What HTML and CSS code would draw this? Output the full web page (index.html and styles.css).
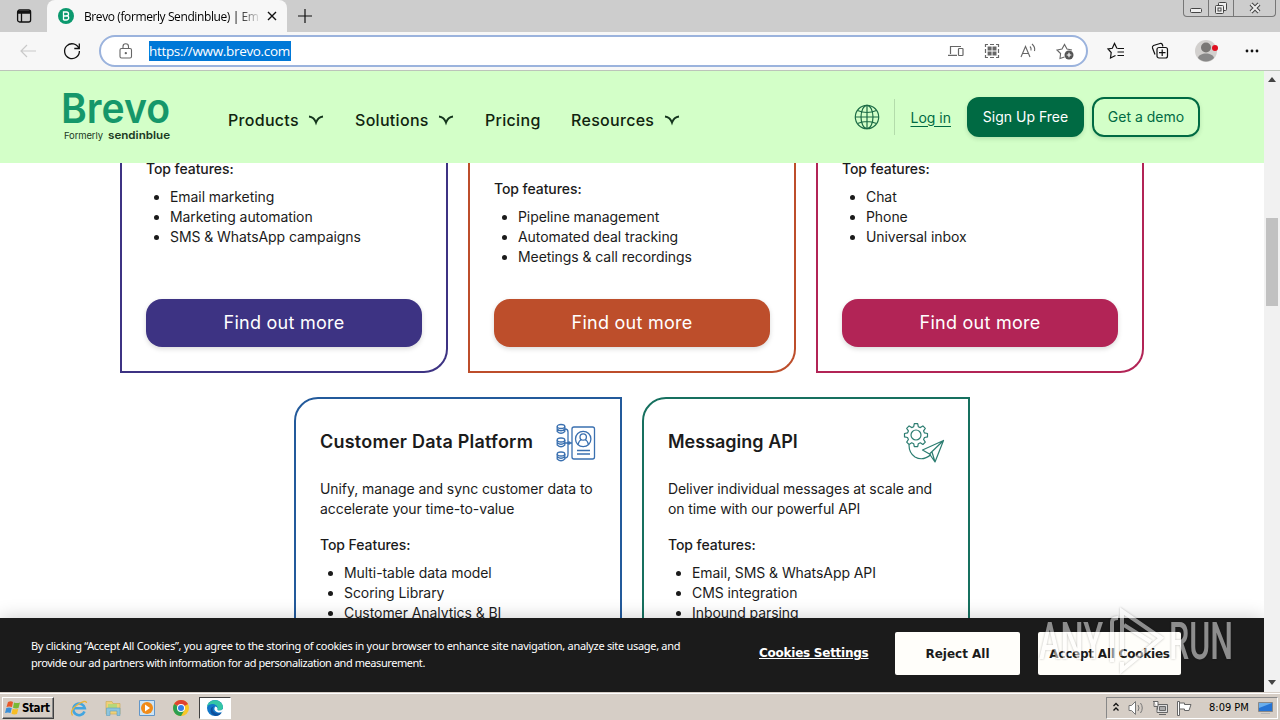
FILE: index.html
```html
<!DOCTYPE html>
<html lang="en">
<head>
    <meta charset="UTF-8">
    <meta name="viewport" content="width=device-width, initial-scale=1.0">
    <title>Brevo (formerly Sendinblue)</title>
    <link rel="stylesheet" href="styles.css">
</head>
<body>
    <div class="screen">
        <div class="titlebar">
            <div class="tab-actions">
                <svg width="16" height="16" viewBox="0 0 16 16" fill="none" stroke="#111" stroke-width="1.3"><rect x="1.6" y="2" width="13" height="12" rx="2"/><path d="M2 3.5h12.5M2 5h12.5M5.5 5v9" /></svg>
            </div>
            <div class="tab">
                <svg class="favicon" width="16" height="16" viewBox="0 0 16 16"><circle cx="8" cy="8" r="8" fill="#0b996e"/><path d="M5.5 12V4h3a2 2 0 0 1 0 4H5.500M8.300 7.600c3.300 0 3 4.400 0 4.400H5.500" fill="none" stroke="#fff" stroke-width="1.300"/></svg>
                <span class="tab-title">Brevo (formerly Sendinblue) | Em</span>
                <svg class="tab-close" width="10" height="10" viewBox="0 0 10 10" stroke="#111" stroke-width="1.4"><path d="M1 1l8 8M9 1l-8 8"/></svg>
            </div>
            <svg class="new-tab" width="14" height="14" viewBox="0 0 14 14" stroke="#111" stroke-width="1.2"><path d="M7 0v14M0 7h14"/></svg>
            <div class="win-buttons">
                <span class="win-min"><svg width="14" height="16" viewBox="0 0 14 16" fill="#eee" stroke="#444"><rect x="1.500" y="8.500" width="11" height="4" rx="1"/></svg></span>
                <span class="win-max"><svg width="14" height="16" viewBox="0 0 14 16" fill="#eee" stroke="#444"><rect x="4.500" y="2.500" width="8" height="8" rx="1"/><rect x="1.500" y="5.500" width="8" height="8" rx="1"/><rect x="4" y="8" width="3" height="3"/></svg></span>
                <span class="win-close"><svg width="14" height="16" viewBox="0 0 14 16"><path d="M3 4l8 8M11 4l-8 8" stroke="#444" stroke-width="4"/><path d="M3 4l8 8M11 4l-8 8" stroke="#eee" stroke-width="2"/></svg></span>
            </div>
        </div>
        <div class="toolbar">
            <svg class="back" width="16" height="14" viewBox="0 0 16 14" fill="none" stroke="#c9c9c9" stroke-width="1.2"><path d="M16 7H1M7 1L1 7l6 6"/></svg>
            <svg class="reload" width="18" height="18" viewBox="0 0 18 18" fill="none" stroke="#111" stroke-width="1.3"><path d="M15.900 6.500A7.400 7.400 0 1 0 16.400 9M16.300 1.500v5h-5"/></svg>
            <div class="address">
                <svg class="lock" width="14" height="16" viewBox="0 0 14 16" fill="none" stroke="#666" stroke-width="1.1"><rect x="1" y="5.500" width="11.500" height="9.500" rx="1.500"/><path d="M4 5.500V3.500a2.700 2.700 0 0 1 5.500 0v2"/><circle cx="6.800" cy="10.200" r=".6" fill="#666"/></svg>
                <span class="url">https://www.brevo.com</span>
                <div class="address-icons">
                    <svg width="16" height="16" viewBox="0 0 16 16" fill="none" stroke="#666" stroke-width="1.2"><path d="M2.500 11V3.500H13M0 12.400h9"/><rect x="10.500" y="5.500" width="4.500" height="7" rx=".7"/></svg>
                    <svg width="16" height="16" viewBox="0 0 16 16" fill="none" stroke="#666" stroke-width="1.200"><path d="M1.500 4V1.500H4M12 1.500h2.500V4M14.500 12v2.500H12M4 14.500H1.500V12M6 1.500h4M6 14.500h4M1.500 6v4M14.500 6v4"/><path d="M3.600 3.600h4v4h-4zM8.500 3.600h4v4h-4zM3.600 8.500h4v4h-4zM8.500 8.500h4v4h-4z" fill="#666" stroke="none"/></svg>
                    <svg width="16" height="16" viewBox="0 0 16 16" fill="none" stroke="#666" stroke-width="1.100"><path d="M1 14L5.500 3.500 10 14M2.700 10.500h5.700M10 3.500q1.500 1.500 1 4M12 1q3.500 3 2.500 7"/></svg>
                    <svg width="18" height="17" viewBox="0 0 18 17" fill="none" stroke="#666" stroke-width="1.100"><path d="M8.500 14L4 15.500l.6-5L1 7l5-.9L8.500 1.500 11 6.100l5 .9"/><circle cx="13" cy="12" r="4.500" fill="#555" stroke="none"/><path d="M13 9.700v4.600M10.700 12h4.600" stroke="#fff"/></svg>
                </div>
            </div>
            <div class="tools">
                <svg width="18" height="18" viewBox="0 0 18 18" fill="none" stroke="#111" stroke-width="1.200"><path d="M10 6.500L7.500 1.500 5.300 6.300 1 7l3.200 3.500L3.500 16l5-2.500M10.500 6.500H17M10.500 10H17M10.500 13.500H17"/></svg>
                <svg width="18" height="18" viewBox="0 0 18 18" fill="none" stroke="#111" stroke-width="1.200"><path d="M4 12.500L1.500 6Q1 4.500 2.500 3.500L9 1.500q2-.5 2.500 1.500l.4 1.500"/><rect x="6" y="5.500" width="10.500" height="10.500" rx="2"/><path d="M11.200 7.500v6.500M8 10.700h6.500"/></svg>
                <svg width="24" height="24" viewBox="0 0 24 24"><circle cx="11" cy="12" r="11" fill="#d2d0ce"/><circle cx="11" cy="8.500" r="5" fill="#797775"/><path d="M3 19c1-6 15-6 16 0a11 11 0 0 1-16 0" fill="#888"/><circle cx="20" cy="9" r="3" fill="#e01020"/></svg>
                <svg width="16" height="4" viewBox="0 0 16 4" fill="#111"><circle cx="3" cy="2" r="1.400"/><circle cx="8" cy="2" r="1.400"/><circle cx="13" cy="2" r="1.400"/></svg>
            </div>
        </div>

        <div class="viewport">
            <div class="page">
                <header class="navbar">
                    <svg class="logo" width="110" height="54" viewBox="0 0 110 54">
                        <text class="logo-name" x="-3" y="33" textLength="109" lengthAdjust="spacingAndGlyphs">Brevo</text>
                        <text class="logo-sub" x="0" y="49" textLength="39">Formerly</text>
                        <text class="logo-sub strong" x="44" y="49" textLength="62" lengthAdjust="spacingAndGlyphs">sendinblue</text>
                    </svg>
                    <nav class="menu">
                        <a class="products">Products <svg class="chevron" width="16" height="10" viewBox="0 0 16 10"><path d="M1 1.500Q6 2 8 7.500Q10 2 15 1.500"/></svg></a>
                        <a class="solutions">Solutions <svg class="chevron" width="16" height="10" viewBox="0 0 16 10"><path d="M1 1.500Q6 2 8 7.500Q10 2 15 1.500"/></svg></a>
                        <a class="pricing">Pricing</a>
                        <a class="resources">Resources <svg class="chevron" width="16" height="10" viewBox="0 0 16 10"><path d="M1 1.500Q6 2 8 7.500Q10 2 15 1.500"/></svg></a>
                    </nav>
                    <div class="account">
                        <svg class="globe" width="26" height="26" viewBox="0 0 26 26" fill="none" stroke="#1b6b45" stroke-width="1.200"><circle cx="13" cy="13" r="11.700"/><ellipse cx="13" cy="13" rx="6" ry="11.700"/><path d="M13 1.300v23.400M1.300 13h23.400M3.500 6.500q9.500 4 19 0M3.500 19.500q9.500-4 19 0"/></svg>
                        <a class="login">Log in</a>
                        <a class="btn btn-primary">Sign Up Free</a>
                        <a class="btn btn-outline">Get a demo</a>
                    </div>
                </header>

                <main>
                    <div class="row row-first">
                        <div class="card card-bottom violet">
                            <p class="label">Top features:</p>
                            <ul>
                                <li>Email marketing</li>
                                <li>Marketing automation</li>
                                <li>SMS &amp; WhatsApp campaigns</li>
                            </ul>
                            <a class="more">Find out more</a>
                        </div>
                        <div class="card card-bottom orange">
                            <p class="label">Top features:</p>
                            <ul>
                                <li>Pipeline management</li>
                                <li>Automated deal tracking</li>
                                <li>Meetings &amp; call recordings</li>
                            </ul>
                            <a class="more">Find out more</a>
                        </div>
                        <div class="card card-bottom pink">
                            <p class="label">Top features:</p>
                            <ul>
                                <li>Chat</li>
                                <li>Phone</li>
                                <li>Universal inbox</li>
                            </ul>
                            <a class="more">Find out more</a>
                        </div>
                    </div>
                    <div class="row">
                        <div class="card card-top blue">
                            <div class="card-head">
                                <h3>Customer Data Platform</h3>
                                <svg width="40" height="40" viewBox="0 0 40 40" fill="none" stroke="#3a70b0" stroke-width="1.300">
                                    <rect x="16" y="4" width="22.500" height="32" rx="2"/><circle cx="27.200" cy="16" r="7.700"/><circle cx="27.200" cy="14" r="3.200"/><path d="M22 21.500q1-4 3.500-5M32.500 21.500q-1-4-3.500-5M21 27.500h13M21 31h13"/>
                                    <path d="M9 6q3 0 3 3v22q0 4-3 4M9 20h7"/><circle cx="13" cy="20" r="1"/>
                                    <ellipse cx="5" cy="3.500" rx="3.800" ry="2"/><path d="M1.200 3.500v5q3.800 3.500 7.600 0v-5M1.200 6q3.800 3.500 7.600 0"/>
                                    <ellipse cx="5" cy="17" rx="3.800" ry="2"/><path d="M1.200 17v5q3.800 3.500 7.600 0v-5M1.200 19.500q3.800 3.500 7.600 0"/>
                                    <ellipse cx="5" cy="31" rx="3.800" ry="2"/><path d="M1.200 31v5q3.800 3.500 7.600 0v-5M1.200 33.500q3.800 3.500 7.600 0"/>
                                </svg>
                            </div>
                            <p class="desc">Unify, manage and sync customer data to accelerate your time-to-value</p>
                            <p class="label">Top Features:</p>
                            <ul>
                                <li>Multi-table data model</li>
                                <li>Scoring Library</li>
                                <li>Customer Analytics &amp; BI</li>
                            </ul>
                        </div>
                        <div class="card card-top green">
                            <div class="card-head">
                                <h3>Messaging API</h3>
                                <svg width="40" height="40" viewBox="0 0 40 40" fill="none" stroke="#2c7d71" stroke-width="1.200" stroke-linejoin="round">
                                    <path d="M10.300 0.700h3.400l.6 3 2 .9 2.600-1.700 2.400 2.400-1.700 2.600.9 2 3 .6v3.400l-3 .6-.9 2 1.700 2.600-2.400 2.400-2.600-1.700-2 .9-.6 3h-3.400l-.6-3-2-.9-2.600 1.700-2.400-2.400 1.700-2.600-.9-2-3-.6v-3.400l3-.6.9-2-1.700-2.600 2.400-2.400 2.600 1.700 2-.9z"/>
                                    <circle cx="12" cy="12" r="5"/>
                                    <path d="M5 22q0 8 6 12 8 4.500 16-2.500"/>
                                    <path d="M39.500 17.500L18.500 27l7 4 14-13.500L31 39l-5.500-8M31 39l-3-10"/>
                                </svg>
                            </div>
                            <p class="desc">Deliver individual messages at scale and on time with our powerful API</p>
                            <p class="label">Top features:</p>
                            <ul>
                                <li>Email, SMS &amp; WhatsApp API</li>
                                <li>CMS integration</li>
                                <li>Inbound parsing</li>
                            </ul>
                        </div>
                    </div>
                </main>

                <div class="cookie-bar">
                    <p>By clicking “Accept All Cookies”, you agree to the storing of cookies in your browser to enhance site navigation, analyze site usage, and<br><span class="second">provide our ad partners with information for ad personalization and measurement.</span></p>
                    <a class="cookie-settings">Cookies Settings</a>
                    <button class="reject">Reject All</button>
                    <button class="accept">Accept All Cookies</button>
                </div>
            </div>
            <div class="scrollbar">
                <svg width="8" height="5" viewBox="0 0 8 5"><path d="M0 5l4-5 4 5z" fill="#444"/></svg>
                <div class="thumb"></div>
                <svg width="8" height="5" viewBox="0 0 8 5"><path d="M0 0l4 5 4-5z" fill="#444"/></svg>
            </div>
        </div>

        <div class="taskbar">
            <div class="start">
                <svg width="16" height="16" viewBox="0 0 16 16"><path d="M3 2q3-1.500 5 0L7 7Q4 5.800 1.500 7z" fill="#e8592a"/><path d="M9 2.500q3 1.200 6 0L13.500 8Q11 9 8 7.700z" fill="#79b935"/><path d="M1.300 8Q4 6.800 6.800 8l-1.300 5Q3 12 0 13z" fill="#3a8fd8"/><path d="M7.700 8.700q3 1.200 5.600 0L12 14q-3 1-5.500-.3z" fill="#f7bd25"/></svg>
                <b>Start</b>
            </div>
            <div class="quick">
                <svg width="18" height="18" viewBox="0 0 18 18" fill="none"><path d="M14.500 12.500A5.800 5.800 0 1 1 14.800 9.300H4.500" stroke="#42a5e0" stroke-width="2.600"/><path d="M2.500 16.500Q-1 12 7 6q9-6 9.500-2" stroke="#e8b43a" stroke-width="1.300"/></svg>
                <svg width="18" height="18" viewBox="0 0 18 18"><path d="M2 2.500h6l1 2h7V15H2z" fill="#efd078" stroke="#c9a94e" stroke-width=".6"/><path d="M4 5h9v4H4z" fill="#b6d879"/><path d="M2.500 9h13.500v7.500h-3V12H6v4.500H2.500z" fill="#8cc5df" stroke="#5f9fc0" stroke-width=".6"/></svg>
                <svg width="18" height="18" viewBox="0 0 18 18"><path d="M1.500 1.500h15v15h-15z" fill="#cde4f5" stroke="#6296c8"/><circle cx="9" cy="9" r="6" fill="#f18b18"/><path d="M7 5.500l5 3.500-5 3.500z" fill="#fff"/></svg>
                <svg width="18" height="18" viewBox="0 0 18 18"><circle cx="9" cy="9" r="8" fill="#f8c727"/><path d="M9 9L2.100 5A8 8 0 0 1 16 5z" fill="#df4232"/><path d="M9 9L2.100 5A8 8 0 0 0 9 17l3.500-6z" fill="#2b9f50"/><circle cx="9" cy="9" r="4" fill="#fff"/><circle cx="9" cy="9" r="3" fill="#347ee8"/></svg>
            </div>
            <div class="running">
                <svg width="18" height="18" viewBox="0 0 18 18"><circle cx="9" cy="9" r="8" fill="#1177c9"/><path d="M1 8C2-1 16-1 17 8q0 4-5 3.500-1-.5-.5-2C12 5 4 3 1 8z" fill="#34c6a5"/><path d="M8 7q-3 3 0 6 3 2.500 7.500 1-2 3-6 3Q3 15 5 9z" fill="#0d4f9c"/><path d="M9 7.500Q7 12 12 13.500q3 .5 5-1.500v-2q-2 2-5 1.500-1-.5-.5-2Q11 7.500 9 7.500z" fill="#fff"/></svg>
            </div>
            <div class="tray">
                <svg width="8" height="11" viewBox="0 0 8 11" fill="none" stroke="#111" stroke-width="1.300"><path d="M1.500 4l2.500-2.500L6.500 4M1.500 8.500L4 6l2.500 2.500"/></svg>
                <svg width="16" height="16" viewBox="0 0 16 16" fill="#fff" stroke="#777"><path d="M1 5.500h2.500l4-4v13l-4-4H1z"/><path d="M10 5q2 3 0 6M12.500 3q3.500 5 0 10" fill="none"/></svg>
                <svg width="16" height="16" viewBox="0 0 16 16" fill="#ddd" stroke="#666"><path d="M5.500 4.500h10v8h-10zM7 14.500h7"/><path d="M1 1.500h5v5H5v6h2M2 1.500v5h3" fill="#fff"/><path d="M7.500 6.500h6v4h-6z" fill="#aaa"/></svg>
                <svg width="16" height="16" viewBox="0 0 16 16" fill="#fff" stroke="#666"><path d="M1.500 1.500h2v14h-2zM3.500 3h5v1.500H15l-2 6H8.500V9h-5z"/></svg>
                <span class="clock">8:09 PM</span>
                <svg width="15" height="14" viewBox="0 0 15 14"><path d="M.5 1.500h14v9H.5z" fill="#2674d4" stroke="#888"/><path d="M1 2h13L1 7z" fill="#6aaeec"/><path d="M3 12h9v1H3z" fill="#b5b5b5"/></svg>
            </div>
        </div>

        <svg class="watermark" width="200" height="68" viewBox="0 0 200 68">
            <text x="0" y="51" textLength="64" lengthAdjust="spacingAndGlyphs">ANY</text>
            <path d="M73 54V14q0-4 6-4M83 48V3l39 27-39 32v-8M85 17l27 17"/>
            <text x="130" y="51" textLength="64" lengthAdjust="spacingAndGlyphs">RUN</text>
        </svg>
    </div>
</body>
</html>
```
FILE: styles.css
```css
* {
    box-sizing: border-box;
}
body {
    margin: 0;
    font-family: Inter, "Liberation Sans", sans-serif;
    color: #1b1b1b;
}
svg {
    display: block;
    flex-shrink: 0;
    overflow: visible;
}
p, h3, ul {
    margin: 0;
}
.screen {
    position: relative;
    display: flex;
    flex-direction: column;
    width: 1280px;
    height: 720px;
    overflow: hidden;
}

/* Browser window */
.titlebar {
    display: flex;
    height: 32px;
    background: #cdcdcd;
}
.tab-actions {
    width: 47px;
    padding: 8px 0 0 16px;
}
.tab {
    display: flex;
    align-items: center;
    width: 240px;
    padding: 0 10px 0 11px;
    background: #f7f7f7;
    border-radius: 8px 8px 0 0;
}
.tab-title {
    width: 174px;
    margin-left: 10px;
    font: 12px "Open Sans", "Noto Sans", sans-serif;
    letter-spacing: -0.4px;
    color: #000;
    white-space: nowrap;
    overflow: hidden;
    -webkit-mask-image: linear-gradient(to right, #000 88%, transparent 102%);
}
.tab-close {
    margin-left: 9px;
}
.new-tab {
    margin: 9px 0 0 11px;
}
.win-buttons {
    display: flex;
    width: 93px;
    height: 17px;
    margin-left: auto;
    margin-right: 4px;
    border: 1px solid #777;
    border-top: none;
    border-radius: 0 0 4px 4px;
}
.win-buttons span {
    display: flex;
    justify-content: center;
    width: 25px;
    border-right: 1px solid #777;
}
.win-buttons .win-close {
    flex: 1;
    border-right: none;
}
.toolbar {
    display: flex;
    align-items: center;
    height: 39px;
    padding: 0 20px;
    background: #f7f7f7;
    border-bottom: 1px solid #bcc4ba;
}
.reload {
    margin-left: 27px;
}
.address {
    display: flex;
    align-items: center;
    width: 990px;
    height: 32px;
    margin-left: 18px;
    padding: 0 12px 0 18px;
    background: #fff;
    border: 2px solid #9bb3dd;
    border-radius: 16px;
}
.url {
    height: 20px;
    width: 142px;
    margin-left: 16px;
    font: 13.5px/20px "Open Sans", "Noto Sans", sans-serif;
    letter-spacing: -0.33px;
    color: #fff;
    background: #0078d7;
    white-space: nowrap;
}
.address-icons {
    display: flex;
    align-items: center;
    gap: 20px;
    margin-left: auto;
}
.tools {
    display: flex;
    align-items: center;
    gap: 26px;
    margin-left: 19px;
}
.tools svg:nth-child(4) {
    margin-left: -1px;
}
.viewport {
    display: flex;
    height: 621px;
}
.page {
    position: relative;
    width: 1264px;
    overflow: hidden;
    background: #fff;
}
.scrollbar {
    display: flex;
    flex-direction: column;
    align-items: center;
    width: 16px;
    padding: 6px 0 7px;
    background: #f1f1f1;
}
.thumb {
    width: 12px;
    height: 88px;
    margin-top: 136px;
    margin-bottom: auto;
    background: #c1c1c1;
}

/* Site header */
.navbar {
    position: relative;
    z-index: 2;
    display: flex;
    height: 92px;
    padding: 0 64px;
    background: #d3ffc8;
}
.logo {
    margin-top: 19px;
}
.logo-name {
    font-size: 41px;
    font-weight: 600;
    fill: #15976a;
}
.logo-sub {
    font-size: 9.5px;
    fill: #1b3a24;
}
.logo-sub.strong {
    font-size: 11px;
    font-weight: 600;
}
.menu {
    display: flex;
    align-items: flex-start;
    margin-left: 54px;
    padding-top: 39px;
    font-size: 16px;
    line-height: 20px;
    font-weight: 500;
    letter-spacing: 0.3px;
    color: #10240f;
}
.menu a {
    display: flex;
    align-items: center;
    justify-content: space-between;
    white-space: nowrap;
}
.products {
    width: 96px;
    margin-right: 31px;
}
.solutions {
    width: 99px;
    margin-right: 31px;
}
.pricing {
    width: 55px;
    margin-right: 31px;
}
.resources {
    width: 109px;
}
.chevron {
    fill: none;
    stroke: #14351d;
    stroke-width: 2;
}
.account {
    display: flex;
    align-items: center;
    height: 40px;
    margin: 26px 0 0 auto;
    font-size: 14px;
    color: #006a43;
}
.login {
    display: flex;
    align-items: center;
    height: 36px;
    margin: 0 16px 0 14px;
    padding-left: 16px;
    border-left: 1px solid #b3dcab;
    text-decoration: underline;
    text-underline-offset: 3px;
}
.btn {
    height: 40px;
    border: 2px solid #006a43;
    border-radius: 12px;
    line-height: 36px;
    text-align: center;
    white-space: nowrap;
    box-shadow: 0 2px 4px rgba(0, 60, 30, 0.15);
}
.btn-primary {
    width: 117px;
    margin-right: 8px;
    background: #006a43;
    color: #fff;
}
.btn-outline {
    width: 108px;
}

/* Product cards */
.row {
    display: flex;
    justify-content: center;
    gap: 20px;
    margin-top: 24px;
}
.row-first {
    height: 214px;
    margin-top: -4px;
}
.card {
    display: flex;
    flex-direction: column;
    width: 328px;
    padding: 24px;
    border: 2px solid;
    font-size: 14px;
    line-height: 20px;
    letter-spacing: -0.07px;
}
.card-bottom {
    padding-top: 0;
    border-top: none;
    border-bottom-right-radius: 24px;
}
.card-top {
    height: 330px;
    border-top-left-radius: 24px;
}
.card-bottom.orange {
    padding-top: 20px;
}
.card p, .card li, .card h3 {
    color: #1b1b1b;
}
.label {
    font-weight: 500;
}
.card ul {
    margin-top: 8px;
    padding-left: 24px;
}
.more {
    height: 48px;
    margin-top: auto;
    border-radius: 16px;
    font-size: 18px;
    line-height: 48px;
    letter-spacing: 0.25px;
    text-align: center;
    color: #fff;
    box-shadow: 0 2px 5px rgba(0, 0, 0, 0.15);
}
.violet {
    border-color: #3d3383;
}
.violet .more {
    background: #3d3383;
}
.orange {
    border-color: #bd4e2b;
}
.orange .more {
    background: #bd4e2b;
}
.pink {
    border-color: #b22456;
}
.pink .more {
    background: #b22456;
}
.blue {
    border-color: #235a9b;
}
.green {
    border-color: #16705f;
}
.card-head {
    display: flex;
    align-items: center;
    justify-content: space-between;
    height: 40px;
    margin-bottom: 16px;
}
.card-head h3 {
    margin-top: -2px;
    font-size: 18px;
    font-weight: 600;
    letter-spacing: 0;
    white-space: nowrap;
}
.blue .card-head h3 {
    letter-spacing: 0.23px;
}
.desc {
    margin-bottom: 16px;
}
.green .desc {
    letter-spacing: -0.1px;
}

/* Cookie consent lies over the page */
.cookie-bar {
    position: absolute;
    left: 0;
    right: 0;
    bottom: 0;
    display: flex;
    height: 74px;
    padding: 14px 83px 0 31px;
    background: #1b1b1b;
    box-shadow: 0 0 18px rgba(0, 0, 0, 0.2);
    color: #fff;
}
.cookie-bar p {
    width: 728px;
    padding-top: 5px;
    font: 11px/17px "Noto Sans", sans-serif;
    letter-spacing: -0.31px;
    white-space: nowrap;
}
.cookie-bar .second {
    letter-spacing: -0.44px;
}
.cookie-settings {
    margin-top: 13px;
    font-family: "DejaVu Sans", sans-serif;
    font-size: 12px;
    line-height: 16px;
    font-weight: bold;
    letter-spacing: -0.25px;
    text-decoration: underline;
    white-space: nowrap;
}
.cookie-bar button {
    height: 43px;
    padding: 0;
    border: none;
    border-radius: 2px;
    background: #fffefa;
    color: #1b1b1b;
    font: bold 12px "DejaVu Sans", sans-serif;
    white-space: nowrap;
}
.cookie-bar .reject {
    width: 125px;
    margin-left: auto;
}
.cookie-bar .accept {
    width: 143px;
    margin-left: 18px;
    letter-spacing: -0.22px;
}

/* Windows taskbar */
.taskbar {
    display: flex;
    align-items: center;
    height: 28px;
    padding: 2px 2px 0;
    background: #d6cec6;
    border-top: 1px solid #d6cec6;
    box-shadow: inset 0 1px #fff;
}
.start {
    display: flex;
    align-items: center;
    gap: 1px;
    width: 52px;
    height: 22px;
    padding-left: 2px;
    border: 1px solid;
    border-color: #fff #404040 #404040 #fff;
    box-shadow: inset -1px -1px #888;
    font: 11.5px "DejaVu Sans Condensed", "DejaVu Sans", sans-serif;
    letter-spacing: -0.4px;
    color: #000;
}
.quick {
    display: flex;
    gap: 16px;
    margin-left: 16px;
}
.running {
    display: flex;
    align-items: center;
    justify-content: center;
    width: 32px;
    height: 22px;
    margin-left: 9px;
    background: #fff;
    border: 1px solid;
    border-color: #404040 #fff #fff #404040;
}
.tray {
    display: flex;
    align-items: center;
    width: 172px;
    height: 22px;
    margin-left: auto;
    padding-left: 5px;
    border: 1px solid;
    border-color: #888 #fff #fff #888;
    gap: 8px;
}
.clock {
    width: 41px;
    margin-left: 9px;
    font: 11px "DejaVu Sans Condensed", "DejaVu Sans", sans-serif;
    color: #000;
    white-space: nowrap;
}

.watermark {
    position: absolute;
    left: 1039px;
    top: 608px;
    opacity: 0.5;
    filter: drop-shadow(0 0 1px rgba(0, 0, 0, 0.5));
}
.watermark text {
    font: 500 52px Roboto, sans-serif;
    fill: #fff;
}
.watermark path {
    fill: none;
    stroke: #fff;
    stroke-width: 4;
}
```
